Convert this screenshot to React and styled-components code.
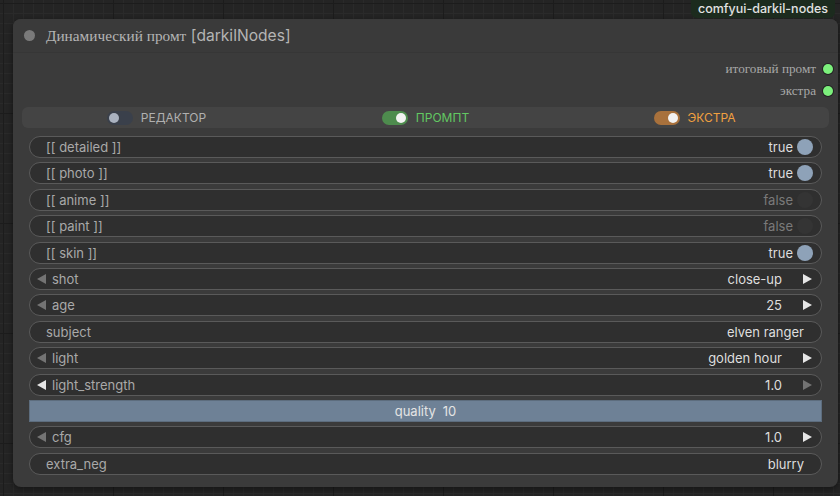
import React from "react";
import styled, { createGlobalStyle } from "styled-components";

const GlobalStyle = createGlobalStyle`
  html, body {
    margin: 0;
    padding: 0;
    background: #232323;
  }
  body {
    font-family: Inter, "Noto Sans", sans-serif;
  }
`;

const Canvas = styled.div`
  width: 840px;
  height: 496px;
  overflow: hidden;
  background-color: #242424;
  background-image:
    linear-gradient(#1c1c1c 1px, transparent 1px),
    linear-gradient(90deg, #1c1c1c 1px, transparent 1px),
    linear-gradient(#2a2a2a 1px, transparent 1px),
    linear-gradient(90deg, #2a2a2a 1px, transparent 1px);
  background-size: 110px 110px, 110px 110px, 10px 10px, 10px 10px;
  background-position: 3px 3px, 3px 3px, 3px 3px, 3px 3px;
`;

const BadgeRow = styled.div`
  display: flex;
  justify-content: flex-end;
  height: 18px;
  padding-right: 5px;
  margin-bottom: 1px;
`;

const Badge = styled.div`
  background: #1c2b1e;
  color: #e2e2e2;
  border-radius: 0 0 6px 6px;
  padding: 0 7px;
  font-size: 12.5px;
  font-weight: 500;
  line-height: 17px;
`;

const Node = styled.div`
  margin-left: 13px;
  width: 825px;
  height: 468px;
  background: #3b3b3b;
  border-radius: 8px;
  box-shadow: 0 2px 6px rgba(0, 0, 0, 0.45);
  display: flex;
  flex-direction: column;
  overflow: hidden;
`;

const Title = styled.div`
  height: 33px;
  display: flex;
  align-items: center;
  gap: 11px;
  padding-left: 11px;
  background: #3a3a3a;
  border-bottom: 1px solid #363636;
  color: #b4b4b4;
  font-size: 15.6px;
`;

const TitleDot = styled.span`
  width: 11px;
  height: 11px;
  border-radius: 50%;
  background: #7a7a7a;
`;

const Serif = styled.span`
  font-family: "Liberation Serif", "DejaVu Serif", serif;
  font-size: 15.3px;
`;

const Outputs = styled.div`
  display: flex;
  flex-direction: column;
  padding: 5px 5px 0 0;
`;

const OutputRow = styled.div`
  height: 22px;
  display: flex;
  align-items: center;
  justify-content: flex-end;
  gap: 7px;
  color: #a8a8a8;
  font-family: "Liberation Serif", "DejaVu Serif", serif;
  font-size: 13.2px;
`;

const Slot = styled.span`
  width: 10px;
  height: 10px;
  border-radius: 50%;
  background: #7cf07c;
  box-shadow: 0 0 0 1px #222;
`;

const ModeBar = styled.div`
  margin: 5px 9px 0;
  height: 21px;
  border-radius: 6px;
  background: #444444;
  display: grid;
  grid-template-columns: repeat(3, 1fr);
`;

const Mode = styled.div`
  display: flex;
  align-items: center;
  justify-content: center;
  gap: 8px;
  font-size: 12px;
  color: ${(p) => p.$color};
`;

const Switch = styled.span`
  width: 26px;
  height: 14px;
  border-radius: 7px;
  background: ${(p) => p.$track};
  display: flex;
  align-items: center;
  justify-content: ${(p) => (p.$on ? "flex-end" : "flex-start")};
  padding: 0 2px;
  box-sizing: border-box;

  &::after {
    content: "";
    width: 10px;
    height: 10px;
    border-radius: 50%;
    background: ${(p) => p.$knob};
  }
`;

const Widgets = styled.div`
  margin-top: 8px;
  padding: 0 16px;
  display: flex;
  flex-direction: column;
  gap: 4.4px;
`;

const Widget = styled.div`
  height: 22px;
  box-sizing: border-box;
  border: 1px solid #5a5a5a;
  border-radius: 11px;
  background: #2f2f2f;
  display: flex;
  align-items: center;
  padding: ${(p) => (p.$combo ? "0 8px 0 6px" : "0 8px 0 16px")};
  font-size: 13px;
  color: #a9a9a9;
`;

const Label = styled.span`
  flex: 1;
  margin-left: ${(p) => (p.$combo ? "5px" : "0")};
`;

const Value = styled.span`
  color: ${(p) => (p.$dim ? "#7a7a7a" : "#dedede")};
  margin-right: ${(p) => p.$gap || "0px"};
`;

const Knob = styled.span`
  width: 16px;
  height: 16px;
  border-radius: 50%;
  margin-left: 4px;
  background: ${(p) => (p.$on ? "#8ea2b8" : "#343434")};
`;

const ArrowSvg = styled.svg`
  width: 11px;
  height: 12px;
  flex: none;
  fill: ${(p) => (p.$dim ? "#747474" : "#e6e6e6")};
`;

const Slider = styled.div`
  height: 22px;
  box-sizing: border-box;
  background: #6e8196;
  border: 1px solid #5d6d7e;
  display: flex;
  align-items: center;
  justify-content: center;
  gap: 7px;
  font-size: 13px;
  color: #e4e4e4;
`;

const Arrow = ({ dir, dim }) => (
  <ArrowSvg viewBox="0 0 11 12" $dim={dim}>
    {dir === "left" ? (
      <polygon points="1,6 10,1 10,11" />
    ) : (
      <polygon points="10,6 1,1 1,11" />
    )}
  </ArrowSvg>
);

const toggles = [
  { label: "detailed", on: true },
  { label: "photo", on: true },
  { label: "anime", on: false },
  { label: "paint", on: false },
  { label: "skin", on: true },
];

const BoolWidget = ({ label, on }) => (
  <Widget>
    <Label>[[ {label} ]]</Label>
    <Value $dim={!on}>{on ? "true" : "false"}</Value>
    <Knob $on={on} />
  </Widget>
);

const ComboWidget = ({ label, value, leftDim = true, rightDim = false }) => (
  <Widget $combo>
    <Arrow dir="left" dim={leftDim} />
    <Label $combo>{label}</Label>
    <Value $gap="20px">{value}</Value>
    <Arrow dir="right" dim={rightDim} />
  </Widget>
);

const TextWidget = ({ label, value }) => (
  <Widget>
    <Label>{label}</Label>
    <Value $gap="9px">{value}</Value>
  </Widget>
);

const App = () => {
  return (
    <Canvas>
      <GlobalStyle />
      <BadgeRow>
        <Badge>comfyui-darkil-nodes</Badge>
      </BadgeRow>
      <Node>
        <Title>
          <TitleDot />
          <span>
            <Serif>Динамический промт</Serif> [darkilNodes]
          </span>
        </Title>
        <Outputs>
          <OutputRow>
            итоговый промт <Slot />
          </OutputRow>
          <OutputRow>
            экстра <Slot />
          </OutputRow>
        </Outputs>
        <ModeBar>
          <Mode $color="#b0b0b0">
            <Switch $track="#3a404b" $knob="#aab2c0" />
            РЕДАКТОР
          </Mode>
          <Mode $color="#62c862">
            <Switch $on $track="#4e8c4e" $knob="#f2f2f2" />
            ПРОМПТ
          </Mode>
          <Mode $color="#f0a040">
            <Switch $on $track="#a8713c" $knob="#f2f2f2" />
            ЭКСТРА
          </Mode>
        </ModeBar>
        <Widgets>
          {toggles.map((t) => (
            <BoolWidget key={t.label} label={t.label} on={t.on} />
          ))}
          <ComboWidget label="shot" value="close-up" />
          <ComboWidget label="age" value="25" />
          <TextWidget label="subject" value="elven ranger" />
          <ComboWidget label="light" value="golden hour" />
          <ComboWidget
            label="light_strength"
            value="1.0"
            leftDim={false}
            rightDim
          />
          <Slider>
            <span>quality</span>
            <span>10</span>
          </Slider>
          <ComboWidget label="cfg" value="1.0" />
          <TextWidget label="extra_neg" value="blurry" />
        </Widgets>
      </Node>
    </Canvas>
  );
};

export default App;
